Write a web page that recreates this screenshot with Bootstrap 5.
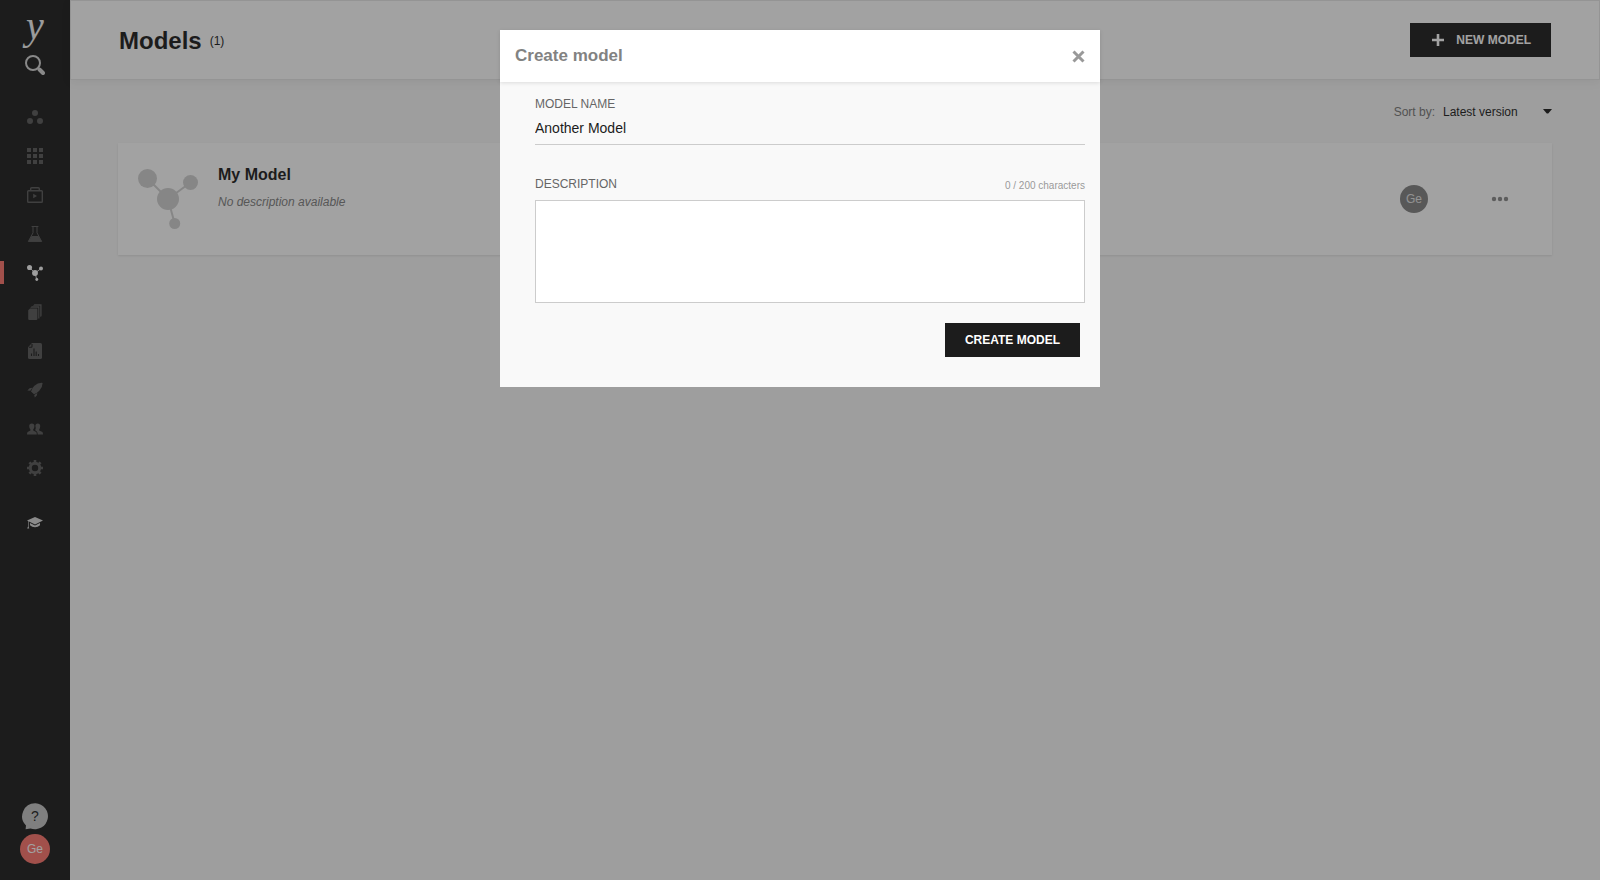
<!DOCTYPE html>
<html lang="en">
<head>
<meta charset="utf-8">
<meta name="viewport" content="width=device-width, initial-scale=1">
<title>Models</title>
<link href="https://cdn.jsdelivr.net/npm/bootstrap@5.3.0/dist/css/bootstrap.min.css" rel="stylesheet">
<style>
  :root { --ink: #1c1c1c; --paper: #f8f8f8; }
  body { font-family: "Liberation Sans", Arial, sans-serif; font-size: 12px; line-height: 18px; color: var(--ink); background: var(--paper); }
  svg { display: block; }

  .side-bar { width: 70px; background: var(--ink); padding: 12px 0 16px; color: #595959; }
  .side-bar a { color: inherit; text-decoration: none; }
  .side-bar .brand { font: italic 40px/28px "Liberation Serif", serif; color: #f4f4f4; height: 40px; }
  .side-bar .find { color: #d4d4d4; height: 26px; }
  .side-nav { margin-top: 19px; }
  .side-nav .nav-link { height: 39px; padding: 0; }
  .side-nav .active { color: #f8f8f8; box-shadow: none; position: relative; }
  .side-nav .active::before { content: ""; position: absolute; left: 0; top: 8px; width: 4px; height: 23px; background: #fd746c; }
  .side-nav .learn { color: #d8d8d8; margin-top: 16px; }
  .side-help { margin-bottom: 4px; }
  .side-help text { font: 14px "Liberation Sans", Arial, sans-serif; }

  .user-dot { width: 28px; height: 28px; background: #828282; color: #e4e4e4; }
  .user-me { width: 30px; height: 30px; background: #fd746c; }

  .top-bar { height: 80px; padding: 0 48px; background: #fff; border: 1px solid #e8e8e8; box-shadow: 0 2px 10px rgba(0,0,0,.06); }
  .top-bar .heading { padding-top: 2px; }
  .top-bar h1 { font-size: 24px; line-height: 32px; font-weight: 700; }
  .btn-ink { --bs-btn-color: #fff; --bs-btn-bg: #1c1c1c; --bs-btn-border-color: #1c1c1c; --bs-btn-hover-color: #fff; --bs-btn-hover-bg: #333; --bs-btn-border-radius: 0; --bs-btn-padding-x: 19px; --bs-btn-padding-y: 7px; --bs-btn-font-size: 12px; --bs-btn-line-height: 18px; --bs-btn-font-weight: 700; }

  .page-body { padding: 0 48px; }
  .sort-row { height: 63px; }
  .sort-row label { color: #777; }
  .sort-pick { width: 109px; border: 0; border-radius: 0; padding: 0; font-size: 12px; line-height: 18px; color: var(--ink); background: url("data:image/svg+xml,%3Csvg xmlns='http://www.w3.org/2000/svg' viewBox='0 0 9 5'%3E%3Cpath d='M0 0H9L5.5 4.2Q4.5 5 3.5 4.2Z' fill='%231c1c1c'/%3E%3C/svg%3E") no-repeat right center / 9px 5px; }
  .model-card { min-height: 112px; border: 0; border-radius: 0; background: #fff; box-shadow: 0 1px 2px rgba(0,0,0,.1); padding: 20px 40px 20px 20px; gap: 20px; }
  .model-card h2 { font-size: 16px; line-height: 24px; font-weight: 700; margin: 0 0 6px; color: var(--ink); }
  .model-card p { color: #808080; margin: 0; }
  .more { width: 24px; height: 24px; margin-left: 40px; }
  .more, .more:hover { color: #8a8a8a; }

  .modal-backdrop { --bs-backdrop-bg: #1c1c1c; opacity: .41; }
  .create-box .modal-dialog { max-width: 600px; margin-top: 30px; }
  .create-box .modal-content { border: 0; border-radius: 0; background: #f9f9f9; }
  .create-box .modal-header { padding: 0 15px; height: 52px; border: 0; border-radius: 0; background: #fff; box-shadow: 0 1px 4px rgba(0,0,0,.12); }
  .create-box .modal-title { font-size: 17px; line-height: 24px; font-weight: 700; color: #828282; }
  .create-box .modal-header button { color: #999; }
  .create-box .modal-body { padding: 13px 15px 30px 35px; }
  .create-box .form-label { color: #666; margin: 0; }
  .create-box .form-control { color: var(--ink); border: 1px solid #ccc; border-radius: 0; font-size: 14px; line-height: 20px; }
  .create-box .name-box { border-width: 0 0 1px; background: transparent; padding: 5px 0 6px; margin-bottom: 30px; }
  .create-box .form-text { font-size: 10px; line-height: 18px; margin: 2px 0 0; color: #999; }
  .create-box .about-box { height: 103px; margin: 5px 0 20px; resize: none; }
  .create-box .actions { padding-right: 5px; }
</style>
</head>
<body>
<div class="d-flex min-vh-100">
  <nav class="side-bar d-flex flex-column align-items-center flex-shrink-0" aria-label="Main">
    <a class="brand" href="#" aria-label="Home">y</a>
    <a class="find" href="#" aria-label="Search">
      <svg width="20" height="26" viewBox="0 0 20 26" fill="none" stroke="currentColor"><circle cx="8" cy="11" r="7" stroke-width="2"/><path d="M13 16L14 17" stroke-width="2"/><path d="M14.5 17.5L18 21" stroke-width="4" stroke-linecap="round"/></svg>
    </a>
    <div class="side-nav nav flex-column w-100">
      <a class="nav-link d-flex align-items-center justify-content-center" href="#" aria-label="Workspace"><svg width="16" height="16" viewBox="0 0 16 16" fill="currentColor"><circle cx="8" cy="4" r="3"/><circle cx="3" cy="12" r="3"/><circle cx="13" cy="12" r="3"/></svg></a>
      <a class="nav-link d-flex align-items-center justify-content-center" href="#" aria-label="Catalog"><svg width="16" height="16" viewBox="0 0 16 16" fill="currentColor"><path d="M0 0h4v4H0zM6 0h4v4H6zM12 0h4v4h-4zM0 6h4v4H0zM6 6h4v4H6zM12 6h4v4h-4zM0 12h4v4H0zM6 12h4v4H6zM12 12h4v4h-4z"/></svg></a>
      <a class="nav-link d-flex align-items-center justify-content-center" href="#" aria-label="Jobs"><svg width="16" height="16" viewBox="0 0 16 16" fill="none" stroke="currentColor"><rect x=".7" y="3.7" width="14.6" height="11.6" rx=".8" stroke-width="1.4"/><path d="M3.7 3V1.8Q3.7.8 4.7.8H11.3Q12.3.8 12.3 1.8V3" stroke-width="1.4"/><path d="M6.2 6.8L10 9L6.2 11.2Z" fill="currentColor" stroke="none"/></svg></a>
      <a class="nav-link d-flex align-items-center justify-content-center" href="#" aria-label="Lab"><svg width="16" height="16" viewBox="0 0 16 16" fill="none" stroke="currentColor"><path d="M4.6.5H11.4M6 1V6.8L1.4 15.4H14.6L10 6.8V1" stroke-width="1"/><path d="M4.6 10H11.6L14.8 15.8H1.2Z" fill="currentColor" stroke="none"/></svg></a>
      <a class="nav-link active d-flex align-items-center justify-content-center" href="#" aria-label="Models" aria-current="page"><svg width="16" height="16" viewBox="0 0 60 60" fill="currentColor"><path d="M9.5 9.5L30 30L52.5 13.5M30 30L36.7 54.5" fill="none" stroke="currentColor" stroke-width="3"/><circle cx="9.5" cy="9.5" r="9.5"/><circle cx="52.5" cy="13.5" r="7.5"/><circle cx="30" cy="30" r="11"/><circle cx="36.7" cy="54.5" r="5.5"/></svg></a>
      <a class="nav-link d-flex align-items-center justify-content-center" href="#" aria-label="Projects"><svg width="16" height="16" viewBox="0 0 16 16" fill="currentColor"><path d="M3 4.4H10.4V15Q10.4 16 9.4 16H2.4Q1.2 16 1.2 15V6.2Z"/><path d="M3.2 3.7L4.8 2.3H12.4V14.4H11.2V3.7ZM6 1.7L7.4.2H14.6V11.4Q14.6 12.6 13.2 12.8V1.7Z"/></svg></a>
      <a class="nav-link d-flex align-items-center justify-content-center" href="#" aria-label="Reports"><svg width="16" height="16" viewBox="0 0 16 16"><path d="M5 0H13.4Q15 0 15 1.6V14.4Q15 16 13.4 16H2.6Q1 16 1 14.4V4.2Z" fill="currentColor"/><path d="M2 4.2H4.4Q5 4.2 5 3.5V1M4.5 13V10.5M7 13V5.5M9.2 13V8.5M11.5 13V11" fill="none" stroke="#1c1c1c" stroke-width="1.1"/></svg></a>
      <a class="nav-link d-flex align-items-center justify-content-center" href="#" aria-label="Deployments"><svg width="16" height="16" viewBox="0 0 16 16" fill="currentColor"><path d="M15.6.9Q10.8.6 7.4 3.8Q4.7 6.4 4 9.4L7 12.2Q10 11.2 12.3 8.7Q15.6 5.2 15.6.9ZM5.4 5.8L2.6 6.2L.4 8.4L3.3 8.7ZM10.4 11L9.8 13.4L7.8 15.6L7.2 12.9Z"/></svg></a>
      <a class="nav-link d-flex align-items-center justify-content-center" href="#" aria-label="Teams"><svg width="16" height="12" viewBox="0 0 16 12" fill="currentColor"><path d="M2.2 3Q2.2.4 4.8.4Q7.4.4 7.4 3Q7.4 5.4 6.2 6.6V7.6L9.2 9Q9.8 9.6 9.8 11.6H0Q0 9.6.6 9L3.4 7.6V6.6Q2.2 5.4 2.2 3Z"/><path d="M8.4 3Q8.4.4 10.8.4Q13.2.4 13.2 3Q13.2 5.4 12.2 6.6V7.6L15.4 9Q16 9.6 16 11.6H10.7Q10.7 9.2 9.8 8.4L8.2 7.3Q9.4 5.4 8.4 3Z"/></svg></a>
      <a class="nav-link d-flex align-items-center justify-content-center" href="#" aria-label="Settings"><svg width="16" height="16" viewBox="0 0 16 16" fill="none" stroke="currentColor"><circle cx="8" cy="8" r="4.7" stroke-width="3"/><path d="M8 0V2.4M8 13.6V16M0 8H2.4M13.6 8H16M2.4 2.4L4 4M12 12L13.6 13.6M2.4 13.6L4 12M12 4L13.6 2.4" stroke-width="2.6"/></svg></a>
      <a class="nav-link learn d-flex align-items-center justify-content-center" href="#" aria-label="Learn"><svg width="16" height="12" viewBox="0 0 16 12" fill="currentColor"><path d="M8 0L16 3.6L8 7.4L0 3.6ZM3 6L8 8.4L13 6V8.2Q11 10.2 8 10.2Q5 10.2 3 8.2Z"/><path d="M1 4V9.6L.2 11.6H2.2L1.6 9.6V4Z"/></svg></a>
    </div>
    <a class="side-help mt-auto" href="#" aria-label="Help">
      <svg width="28" height="27" viewBox="0 0 28 27"><path d="M14.5.3A13 13 0 1 1 9.5 25.5L4.6 26.3L5 22.5A13 13 0 0 1 14.5.3Z" fill="#c4c4c4"/><text x="14" y="18" text-anchor="middle" fill="#1c1c1c">?</text></svg>
    </a>
    <a class="user-dot user-me rounded-circle d-flex align-items-center justify-content-center" href="#">
      <span class="text-white">Ge</span>
    </a>
  </nav>

  <main class="flex-grow-1">
    <header class="top-bar d-flex align-items-center">
      <div class="heading d-flex align-items-center gap-2">
        <h1 class="mb-0">Models</h1><span>(1)</span>
      </div>
      <button type="button" class="btn btn-ink ms-auto d-flex align-items-center">
        <svg width="18" height="14" viewBox="0 0 18 14" class="me-2" aria-hidden="true"><path d="M8 1V13M2 7H14" stroke="currentColor" stroke-width="2.6"/></svg>
        NEW MODEL
      </button>
    </header>
    <div class="page-body">
      <div class="sort-row d-flex align-items-center justify-content-end gap-2">
        <label for="sort">Sort by:</label>
        <select id="sort" class="form-select sort-pick"><option>Latest version</option></select>
      </div>
      <article class="card model-card flex-row align-items-center">
        <svg width="60" height="60" viewBox="0 0 60 60" fill="#d0d0d0" class="flex-shrink-0" aria-hidden="true"><path d="M9.5 9.5L30 30L52.5 13.5M30 30L36.7 54.5" fill="none" stroke="#d0d0d0" stroke-width="2"/><circle cx="9.5" cy="9.5" r="9.5"/><circle cx="52.5" cy="13.5" r="7.5"/><circle cx="30" cy="30" r="11"/><circle cx="36.7" cy="54.5" r="5.5"/></svg>
        <div class="flex-grow-1 align-self-start">
          <h2>My Model</h2>
          <p class="fst-italic">No description available</p>
        </div>
        <span class="user-dot rounded-circle d-flex align-items-center justify-content-center">Ge</span>
        <button type="button" class="btn more border-0 p-0 d-flex align-items-center justify-content-center" aria-label="More actions">
          <svg width="16" height="4" viewBox="0 0 16 4" fill="currentColor" overflow="visible"><circle cx="2" cy="2" r="2.2"/><circle cx="8" cy="2" r="2.2"/><circle cx="14" cy="2" r="2.2"/></svg>
        </button>
      </article>
    </div>
  </main>
</div>

<div class="modal-backdrop"></div>
<div class="modal create-box d-block" tabindex="-1" role="dialog" aria-labelledby="createTitle">
  <div class="modal-dialog">
    <form class="modal-content">
      <div class="modal-header">
        <h2 class="modal-title" id="createTitle">Create model</h2>
        <button type="button" class="btn border-0 p-0" aria-label="Close">
          <svg width="13" height="13" viewBox="0 0 13 13"><path d="M1.5 1.5L11.5 11.5M11.5 1.5L1.5 11.5" stroke="currentColor" stroke-width="3"/></svg>
        </button>
      </div>
      <div class="modal-body">
        <label class="form-label d-block" for="modelName">MODEL NAME</label>
        <input class="form-control name-box" id="modelName" type="text" value="Another Model">
        <div class="d-flex justify-content-between">
          <label class="form-label" for="modelAbout">DESCRIPTION</label>
          <span class="form-text">0 / 200 characters</span>
        </div>
        <textarea class="form-control about-box" id="modelAbout"></textarea>
        <div class="actions d-flex justify-content-end">
          <button type="submit" class="btn btn-ink">CREATE MODEL</button>
        </div>
      </div>
    </form>
  </div>
</div>
<script src="https://cdn.jsdelivr.net/npm/bootstrap@5.3.0/dist/js/bootstrap.bundle.min.js"></script>
</body>
</html>
